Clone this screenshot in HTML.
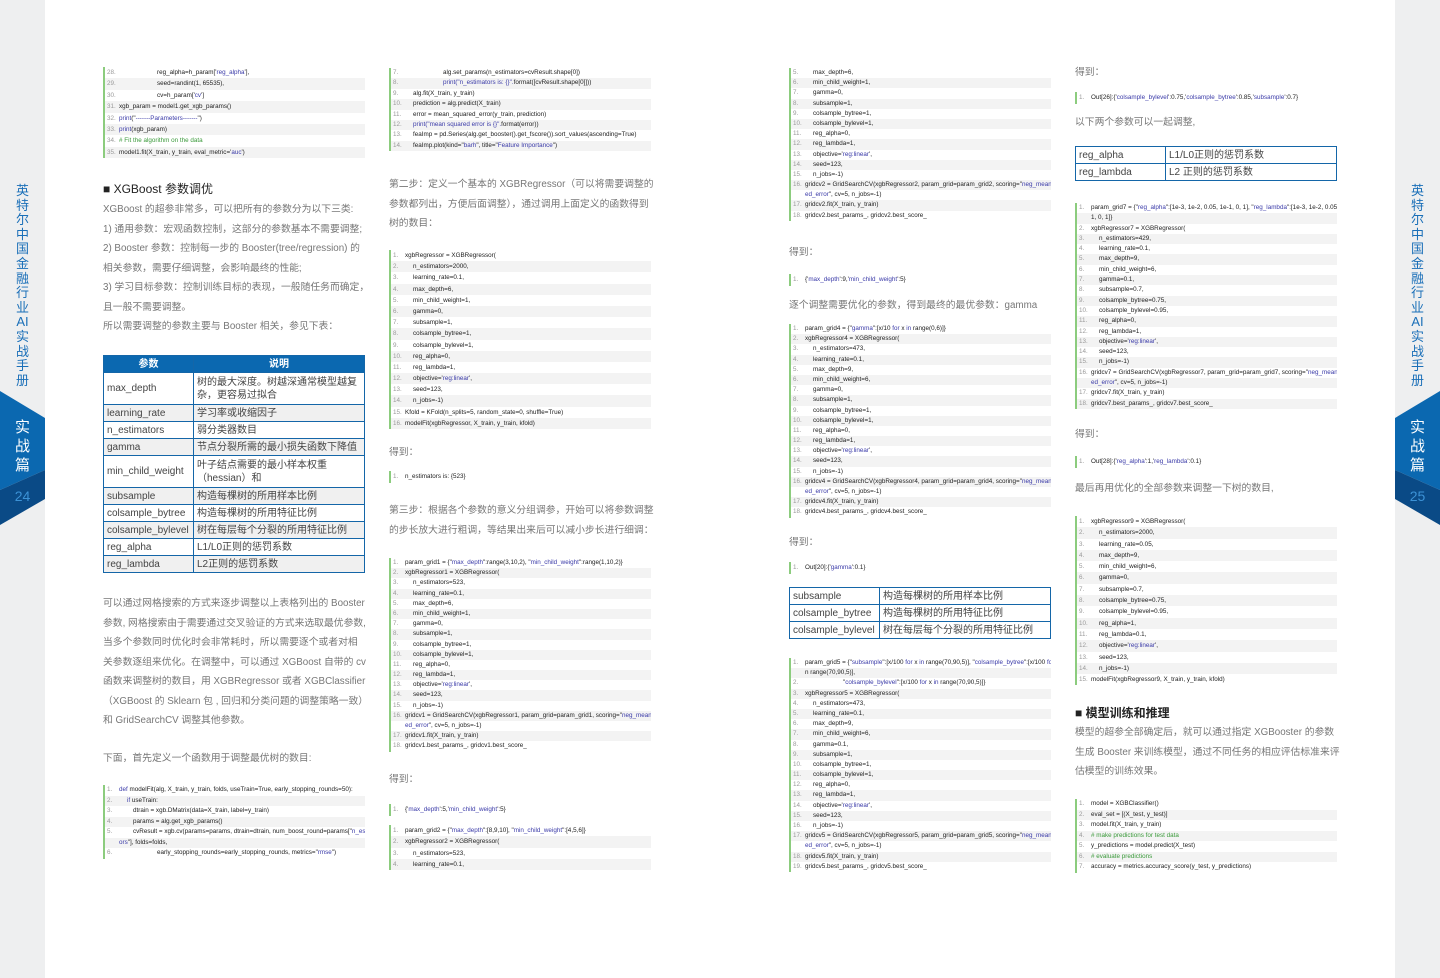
<!DOCTYPE html>
<html><head><meta charset="utf-8"><style>
*{box-sizing:border-box}
body{margin:0;width:1440px;height:978px;position:relative;background:#fff;font-family:"Liberation Sans","Noto Sans CJK SC",sans-serif;overflow:hidden}
.side{position:absolute;top:0;width:45px;height:978px;background:#eeeff0}
.vt{position:absolute;width:45px;text-align:center;color:#1a6fb8;font-size:13px;line-height:14.6px;top:184px}
.c{position:absolute;border-left:2px solid #8ccc7e}
.c p{margin:0;font-size:6.3px;white-space:nowrap;overflow:hidden;color:#222;padding-left:14px;position:relative}
.c p i{position:absolute;left:2px;font-style:normal;color:#999}
.c p:nth-child(even){background:#f3f3f3}
.c p.a{padding-left:22px}.c p.b2{padding-left:28px}.c p.d{padding-left:52px}
.s{color:#3a3aa8}.g{color:#3a9a3a}
.t{position:absolute;font-size:9.8px;color:#777;line-height:19.5px;white-space:nowrap}
.h{position:absolute;font-size:12px;color:#222;white-space:nowrap}
table{position:absolute;border-collapse:collapse;font-size:10px;color:#444}
td,th{border:1.5px solid #1466a8;padding:0 3px;height:17px;line-height:13px;text-align:left;font-weight:normal}
th{background:#0b68b0;color:#fff;text-align:center;font-weight:bold}
tr.gr td{background:#f0f0f0}
</style></head><body>
<div class="side" style="left:0"></div>
<div class="side" style="left:1395px"></div>
<div class="vt" style="left:0">英<br>特<br>尔<br>中<br>国<br>金<br>融<br>行<br>业<br>AI<br>实<br>战<br>手<br>册</div>
<div class="vt" style="left:1395px">英<br>特<br>尔<br>中<br>国<br>金<br>融<br>行<br>业<br>AI<br>实<br>战<br>手<br>册</div>
<svg style="position:absolute;left:0;top:385px" width="45" height="145"><polygon points="0,6 45,33 45,85 0,105" fill="#0b68b0"/><polygon points="0,105 45,85 45,114 0,140" fill="#0a4a86"/></svg>
<svg style="position:absolute;left:1395px;top:385px" width="45" height="145"><polygon points="45,6 0,33 0,85 45,105" fill="#0b68b0"/><polygon points="45,105 0,85 0,114 45,140" fill="#0a4a86"/></svg>
<div style="position:absolute;left:0;width:45px;top:418px;text-align:center;color:#fff;font-size:15px;line-height:19px">实<br>战<br>篇</div>
<div style="position:absolute;left:1395px;width:45px;top:418px;text-align:center;color:#fff;font-size:15px;line-height:19px">实<br>战<br>篇</div>
<div style="position:absolute;left:0;width:45px;top:488px;text-align:center;color:#3c92d6;font-size:14px">24</div>
<div style="position:absolute;left:1395px;width:45px;top:488px;text-align:center;color:#3c92d6;font-size:14px">25</div>

<!-- COL1 -->
<div class="c" style="left:103px;top:67px;width:262px">
<p class="d" style="height:11.4px;line-height:11.4px"><i>28.</i>reg_alpha=h_param['<span class="s">reg_alpha</span>'],</p>
<p class="d" style="height:11.4px;line-height:11.4px"><i>29.</i>seed=randint(1, 65535),</p>
<p class="d" style="height:11.4px;line-height:11.4px"><i>30.</i>cv=h_param['<span class="s">cv</span>']</p>
<p style="height:11.4px;line-height:11.4px"><i>31.</i>xgb_param = model1.get_xgb_params()</p>
<p style="height:11.4px;line-height:11.4px"><i>32.</i><span class="s">print</span>("<span class="s">-------Parameters-------</span>")</p>
<p style="height:11.4px;line-height:11.4px"><i>33.</i><span class="s">print</span>(xgb_param)</p>
<p style="height:11.4px;line-height:11.4px"><i>34.</i><span class="g"># Fit the algorithm on the data</span></p>
<p style="height:11.4px;line-height:11.4px"><i>35.</i>model1.fit(X_train, y_train, eval_metric='<span class="s">auc</span>')</p>
</div>
<div class="h" style="left:103px;top:180px">■ XGBoost 参数调优</div>
<div class="t" style="left:103px;top:200px">XGBoost 的超参非常多，可以把所有的参数分为以下三类:<br>1) 通用参数：宏观函数控制，这部分的参数基本不需要调整;<br>2) Booster 参数：控制每一步的 Booster(tree/regression) 的<br>相关参数，需要仔细调整，会影响最终的性能;<br>3) 学习目标参数：控制训练目标的表现，一般随任务而确定，<br>且一般不需要调整。<br>所以需要调整的参数主要与 Booster 相关，参见下表：</div>
<table style="left:103px;top:355px;width:262px">
<tr><th style="width:90px">参数</th><th>说明</th></tr>
<tr><td>max_depth</td><td style="height:32px">树的最大深度。树越深通常模型越复杂，更容易过拟合</td></tr>
<tr class="gr"><td>learning_rate</td><td>学习率或收缩因子</td></tr>
<tr><td>n_estimators</td><td>弱分类器数目</td></tr>
<tr class="gr"><td>gamma</td><td>节点分裂所需的最小损失函数下降值</td></tr>
<tr><td>min_child_weight</td><td style="height:32px">叶子结点需要的最小样本权重（hessian）和</td></tr>
<tr class="gr"><td>subsample</td><td>构造每棵树的所用样本比例</td></tr>
<tr><td>colsample_bytree</td><td>构造每棵树的所用特征比例</td></tr>
<tr class="gr"><td>colsample_bylevel</td><td>树在每层每个分裂的所用特征比例</td></tr>
<tr><td>reg_alpha</td><td>L1/L0正则的惩罚系数</td></tr>
<tr class="gr"><td>reg_lambda</td><td>L2正则的惩罚系数</td></tr>
</table>
<div class="t" style="left:103px;top:594px">可以通过网格搜索的方式来逐步调整以上表格列出的 Booster<br>参数, 网格搜索由于需要通过交叉验证的方式来选取最优参数,<br>当多个参数同时优化时会非常耗时，所以需要逐个或者对相<br>关参数逐组来优化。在调整中，可以通过 XGBoost 自带的 cv<br>函数来调整树的数目，用 XGBRegressor 或者 XGBClassifier<br>（XGBoost 的 Sklearn 包 , 回归和分类问题的调整策略一致）<br>和 GridSearchCV 调整其他参数。</div>
<div class="t" style="left:103px;top:749px">下面，首先定义一个函数用于调整最优树的数目:</div>
<div class="c" style="left:103px;top:785px;width:262px">
<p style="height:10.5px;line-height:10.5px"><i>1.</i><span class="s">def</span> modelFit(alg, X_train, y_train, folds, useTrain=True, early_stopping_rounds=50):</p>
<p class="a" style="height:10.5px;line-height:10.5px"><i>2.</i><span class="s">if</span> useTrain:</p>
<p class="b2" style="height:10.5px;line-height:10.5px"><i>3.</i>dtrain = xgb.DMatrix(data=X_train, label=y_train)</p>
<p class="b2" style="height:10.5px;line-height:10.5px"><i>4.</i>params = alg.get_xgb_params()</p>
<p class="b2" style="height:10.5px;line-height:10.5px"><i>5.</i>cvResult = xgb.cv(params=params, dtrain=dtrain, num_boost_round=params["<span class="s">n_estimat</span></p>
<p style="height:10.5px;line-height:10.5px"><i></i><span class="s">ors</span>"], folds=folds,</p>
<p class="d" style="height:10.5px;line-height:10.5px"><i>6.</i>early_stopping_rounds=early_stopping_rounds, metrics="<span class="s">rmse</span>")</p>
</div>

<!-- COL2 -->
<div class="c" style="left:389px;top:68px;width:262px">
<p class="d" style="height:10.4px;line-height:10.4px"><i>7.</i>alg.set_params(n_estimators=cvResult.shape[0])</p>
<p class="d" style="height:10.4px;line-height:10.4px"><i>8.</i><span class="s">print("n_estimators is: {}".</span>format([cvResult.shape[0]]))</p>
<p class="a" style="height:10.4px;line-height:10.4px"><i>9.</i>alg.fit(X_train, y_train)</p>
<p class="a" style="height:10.4px;line-height:10.4px"><i>10.</i>prediction = alg.predict(X_train)</p>
<p class="a" style="height:10.4px;line-height:10.4px"><i>11.</i>error = mean_squared_error(y_train, prediction)</p>
<p class="a" style="height:10.4px;line-height:10.4px"><i>12.</i><span class="s">print("mean squared error is {}".</span>format(error))</p>
<p class="a" style="height:10.4px;line-height:10.4px"><i>13.</i>feaImp = pd.Series(alg.get_booster().get_fscore()).sort_values(ascending=True)</p>
<p class="a" style="height:10.4px;line-height:10.4px"><i>14.</i>feaImp.plot(kind="<span class="s">barh</span>", title="<span class="s">Feature Importance</span>")</p>
</div>
<div class="t" style="left:389px;top:175px">第二步：定义一个基本的 XGBRegressor（可以将需要调整的<br>参数都列出，方便后面调整），通过调用上面定义的函数得到<br>树的数目：</div>
<div class="c" style="left:389px;top:250px;width:262px">
<p style="height:11.2px;line-height:11.2px"><i>1.</i>xgbRegressor = XGBRegressor(</p>
<p class="a" style="height:11.2px;line-height:11.2px"><i>2.</i>n_estimators=2000,</p>
<p class="a" style="height:11.2px;line-height:11.2px"><i>3.</i>learning_rate=0.1,</p>
<p class="a" style="height:11.2px;line-height:11.2px"><i>4.</i>max_depth=6,</p>
<p class="a" style="height:11.2px;line-height:11.2px"><i>5.</i>min_child_weight=1,</p>
<p class="a" style="height:11.2px;line-height:11.2px"><i>6.</i>gamma=0,</p>
<p class="a" style="height:11.2px;line-height:11.2px"><i>7.</i>subsample=1,</p>
<p class="a" style="height:11.2px;line-height:11.2px"><i>8.</i>colsample_bytree=1,</p>
<p class="a" style="height:11.2px;line-height:11.2px"><i>9.</i>colsample_bylevel=1,</p>
<p class="a" style="height:11.2px;line-height:11.2px"><i>10.</i>reg_alpha=0,</p>
<p class="a" style="height:11.2px;line-height:11.2px"><i>11.</i>reg_lambda=1,</p>
<p class="a" style="height:11.2px;line-height:11.2px"><i>12.</i>objective='<span class="s">reg:linear</span>',</p>
<p class="a" style="height:11.2px;line-height:11.2px"><i>13.</i>seed=123,</p>
<p class="a" style="height:11.2px;line-height:11.2px"><i>14.</i>n_jobs=-1)</p>
<p style="height:11.2px;line-height:11.2px"><i>15.</i>Kfold = KFold(n_splits=5, random_state=0, shuffle=True)</p>
<p style="height:11.2px;line-height:11.2px"><i>16.</i>modelFit(xgbRegressor, X_train, y_train, kfold)</p>
</div>
<div class="t" style="left:389px;top:443px">得到：</div>
<div class="c" style="left:389px;top:471px;width:262px"><p style="height:12px;line-height:12px"><i>1.</i>n_estimators is: {523}</p></div>
<div class="t" style="left:389px;top:501px">第三步：根据各个参数的意义分组调参，开始可以将参数调整<br>的步长放大进行粗调，等结果出来后可以减小步长进行细调：</div>
<div class="c" style="left:389px;top:558px;width:262px">
<p style="height:10.2px;line-height:10.2px"><i>1.</i>param_grid1 = {"<span class="s">max_depth</span>":range(3,10,2), "<span class="s">min_child_weight</span>":range(1,10,2)}</p>
<p style="height:10.2px;line-height:10.2px"><i>2.</i>xgbRegressor1 = XGBRegressor(</p>
<p class="a" style="height:10.2px;line-height:10.2px"><i>3.</i>n_estimators=523,</p>
<p class="a" style="height:10.2px;line-height:10.2px"><i>4.</i>learning_rate=0.1,</p>
<p class="a" style="height:10.2px;line-height:10.2px"><i>5.</i>max_depth=6,</p>
<p class="a" style="height:10.2px;line-height:10.2px"><i>6.</i>min_child_weight=1,</p>
<p class="a" style="height:10.2px;line-height:10.2px"><i>7.</i>gamma=0,</p>
<p class="a" style="height:10.2px;line-height:10.2px"><i>8.</i>subsample=1,</p>
<p class="a" style="height:10.2px;line-height:10.2px"><i>9.</i>colsample_bytree=1,</p>
<p class="a" style="height:10.2px;line-height:10.2px"><i>10.</i>colsample_bylevel=1,</p>
<p class="a" style="height:10.2px;line-height:10.2px"><i>11.</i>reg_alpha=0,</p>
<p class="a" style="height:10.2px;line-height:10.2px"><i>12.</i>reg_lambda=1,</p>
<p class="a" style="height:10.2px;line-height:10.2px"><i>13.</i>objective='<span class="s">reg:linear</span>',</p>
<p class="a" style="height:10.2px;line-height:10.2px"><i>14.</i>seed=123,</p>
<p class="a" style="height:10.2px;line-height:10.2px"><i>15.</i>n_jobs=-1)</p>
<p style="height:10.2px;line-height:10.2px"><i>16.</i>gridcv1 = GridSearchCV(xgbRegressor1, param_grid=param_grid1, scoring="<span class="s">neg_mean_squar</span></p>
<p style="height:10.2px;line-height:10.2px"><i></i><span class="s">ed_error</span>", cv=5, n_jobs=-1)</p>
<p style="height:10.2px;line-height:10.2px"><i>17.</i>gridcv1.fit(X_train, y_train)</p>
<p style="height:10.2px;line-height:10.2px"><i>18.</i>gridcv1.best_params_, gridcv1.best_score_</p>
</div>
<div class="t" style="left:389px;top:770px">得到：</div>
<div class="c" style="left:389px;top:804px;width:262px"><p style="height:12px;line-height:12px"><i>1.</i>{'<span class="s">max_depth</span>':5,'<span class="s">min_child_weight</span>':5}</p></div>
<div class="c" style="left:389px;top:825px;width:262px">
<p style="height:11.3px;line-height:11.3px"><i>1.</i>param_grid2 = {"<span class="s">max_depth</span>":[8,9,10], "<span class="s">min_child_weight</span>":[4,5,6]}</p>
<p style="height:11.3px;line-height:11.3px"><i>2.</i>xgbRegressor2 = XGBRegressor(</p>
<p class="a" style="height:11.3px;line-height:11.3px"><i>3.</i>n_estimators=523,</p>
<p class="a" style="height:11.3px;line-height:11.3px"><i>4.</i>learning_rate=0.1,</p>
</div>

<!-- COL3 -->
<div class="c" style="left:789px;top:68px;width:262px">
<p class="a" style="height:10.2px;line-height:10.2px"><i>5.</i>max_depth=6,</p>
<p class="a" style="height:10.2px;line-height:10.2px"><i>6.</i>min_child_weight=1,</p>
<p class="a" style="height:10.2px;line-height:10.2px"><i>7.</i>gamma=0,</p>
<p class="a" style="height:10.2px;line-height:10.2px"><i>8.</i>subsample=1,</p>
<p class="a" style="height:10.2px;line-height:10.2px"><i>9.</i>colsample_bytree=1,</p>
<p class="a" style="height:10.2px;line-height:10.2px"><i>10.</i>colsample_bylevel=1,</p>
<p class="a" style="height:10.2px;line-height:10.2px"><i>11.</i>reg_alpha=0,</p>
<p class="a" style="height:10.2px;line-height:10.2px"><i>12.</i>reg_lambda=1,</p>
<p class="a" style="height:10.2px;line-height:10.2px"><i>13.</i>objective='<span class="s">reg:linear</span>',</p>
<p class="a" style="height:10.2px;line-height:10.2px"><i>14.</i>seed=123,</p>
<p class="a" style="height:10.2px;line-height:10.2px"><i>15.</i>n_jobs=-1)</p>
<p style="height:10.2px;line-height:10.2px"><i>16.</i>gridcv2 = GridSearchCV(xgbRegressor2, param_grid=param_grid2, scoring="<span class="s">neg_mean_squar</span></p>
<p style="height:10.2px;line-height:10.2px"><i></i><span class="s">ed_error</span>", cv=5, n_jobs=-1)</p>
<p style="height:10.2px;line-height:10.2px"><i>17.</i>gridcv2.fit(X_train, y_train)</p>
<p style="height:10.2px;line-height:10.2px"><i>18.</i>gridcv2.best_params_, gridcv2.best_score_</p>
</div>
<div class="t" style="left:789px;top:243px">得到：</div>
<div class="c" style="left:789px;top:274px;width:262px"><p style="height:12px;line-height:12px"><i>1.</i>{'<span class="s">max_depth</span>':9,'<span class="s">min_child_weight</span>':5}</p></div>
<div class="t" style="left:789px;top:296px">逐个调整需要优化的参数，得到最终的最优参数：gamma</div>
<div class="c" style="left:789px;top:324px;width:262px">
<p style="height:10.2px;line-height:10.2px"><i>1.</i>param_grid4 = {"<span class="s">gamma</span>":[x/10 <span class="s">for</span> x <span class="s">in</span> range(0,6)]}</p>
<p style="height:10.2px;line-height:10.2px"><i>2.</i>xgbRegressor4 = XGBRegressor(</p>
<p class="a" style="height:10.2px;line-height:10.2px"><i>3.</i>n_estimators=473,</p>
<p class="a" style="height:10.2px;line-height:10.2px"><i>4.</i>learning_rate=0.1,</p>
<p class="a" style="height:10.2px;line-height:10.2px"><i>5.</i>max_depth=9,</p>
<p class="a" style="height:10.2px;line-height:10.2px"><i>6.</i>min_child_weight=6,</p>
<p class="a" style="height:10.2px;line-height:10.2px"><i>7.</i>gamma=0,</p>
<p class="a" style="height:10.2px;line-height:10.2px"><i>8.</i>subsample=1,</p>
<p class="a" style="height:10.2px;line-height:10.2px"><i>9.</i>colsample_bytree=1,</p>
<p class="a" style="height:10.2px;line-height:10.2px"><i>10.</i>colsample_bylevel=1,</p>
<p class="a" style="height:10.2px;line-height:10.2px"><i>11.</i>reg_alpha=0,</p>
<p class="a" style="height:10.2px;line-height:10.2px"><i>12.</i>reg_lambda=1,</p>
<p class="a" style="height:10.2px;line-height:10.2px"><i>13.</i>objective='<span class="s">reg:linear</span>',</p>
<p class="a" style="height:10.2px;line-height:10.2px"><i>14.</i>seed=123,</p>
<p class="a" style="height:10.2px;line-height:10.2px"><i>15.</i>n_jobs=-1)</p>
<p style="height:10.2px;line-height:10.2px"><i>16.</i>gridcv4 = GridSearchCV(xgbRegressor4, param_grid=param_grid4, scoring="<span class="s">neg_mean_squar</span></p>
<p style="height:10.2px;line-height:10.2px"><i></i><span class="s">ed_error</span>", cv=5, n_jobs=-1)</p>
<p style="height:10.2px;line-height:10.2px"><i>17.</i>gridcv4.fit(X_train, y_train)</p>
<p style="height:10.2px;line-height:10.2px"><i>18.</i>gridcv4.best_params_, gridcv4.best_score_</p>
</div>
<div class="t" style="left:789px;top:533px">得到：</div>
<div class="c" style="left:789px;top:562px;width:262px"><p style="height:12px;line-height:12px"><i>1.</i>Out[20]:{'<span class="s">gamma</span>':0.1}</p></div>
<table style="left:789px;top:587px;width:262px">
<tr><td style="width:90px">subsample</td><td>构造每棵树的所用样本比例</td></tr>
<tr><td>colsample_bytree</td><td>构造每棵树的所用特征比例</td></tr>
<tr><td>colsample_bylevel</td><td>树在每层每个分裂的所用特征比例</td></tr>
</table>
<div class="c" style="left:789px;top:658px;width:262px">
<p style="height:10.2px;line-height:10.2px"><i>1.</i>param_grid5 = {"<span class="s">subsample</span>":[x/100 <span class="s">for</span> x <span class="s">in</span> range(70,90,5)], "<span class="s">colsample_bytree</span>":[x/100 <span class="s">for</span> x i</p>
<p style="height:10.2px;line-height:10.2px"><i></i>n range(70,90,5)],</p>
<p class="d" style="height:10.2px;line-height:10.2px"><i>2.</i>"<span class="s">colsample_bylevel</span>":[x/100 <span class="s">for</span> x <span class="s">in</span> range(70,90,5)]}</p>
<p style="height:10.2px;line-height:10.2px"><i>3.</i>xgbRegressor5 = XGBRegressor(</p>
<p class="a" style="height:10.2px;line-height:10.2px"><i>4.</i>n_estimators=473,</p>
<p class="a" style="height:10.2px;line-height:10.2px"><i>5.</i>learning_rate=0.1,</p>
<p class="a" style="height:10.2px;line-height:10.2px"><i>6.</i>max_depth=9,</p>
<p class="a" style="height:10.2px;line-height:10.2px"><i>7.</i>min_child_weight=6,</p>
<p class="a" style="height:10.2px;line-height:10.2px"><i>8.</i>gamma=0.1,</p>
<p class="a" style="height:10.2px;line-height:10.2px"><i>9.</i>subsample=1,</p>
<p class="a" style="height:10.2px;line-height:10.2px"><i>10.</i>colsample_bytree=1,</p>
<p class="a" style="height:10.2px;line-height:10.2px"><i>11.</i>colsample_bylevel=1,</p>
<p class="a" style="height:10.2px;line-height:10.2px"><i>12.</i>reg_alpha=0,</p>
<p class="a" style="height:10.2px;line-height:10.2px"><i>13.</i>reg_lambda=1,</p>
<p class="a" style="height:10.2px;line-height:10.2px"><i>14.</i>objective='<span class="s">reg:linear</span>',</p>
<p class="a" style="height:10.2px;line-height:10.2px"><i>15.</i>seed=123,</p>
<p class="a" style="height:10.2px;line-height:10.2px"><i>16.</i>n_jobs=-1)</p>
<p style="height:10.2px;line-height:10.2px"><i>17.</i>gridcv5 = GridSearchCV(xgbRegressor5, param_grid=param_grid5, scoring="<span class="s">neg_mean_squar</span></p>
<p style="height:10.2px;line-height:10.2px"><i></i><span class="s">ed_error</span>", cv=5, n_jobs=-1)</p>
<p style="height:10.2px;line-height:10.2px"><i>18.</i>gridcv5.fit(X_train, y_train)</p>
<p style="height:10.2px;line-height:10.2px"><i>19.</i>gridcv5.best_params_, gridcv5.best_score_</p>
</div>

<!-- COL4 -->
<div class="t" style="left:1075px;top:63px">得到：</div>
<div class="c" style="left:1075px;top:92px;width:262px"><p style="height:12px;line-height:12px"><i>1.</i>Out[26]:{'<span class="s">colsample_bylevel</span>':0.75,'<span class="s">colsample_bytree</span>':0.85,'<span class="s">subsample</span>':0.7}</p></div>
<div class="t" style="left:1075px;top:113px">以下两个参数可以一起调整,</div>
<table style="left:1075px;top:146px;width:262px">
<tr><td style="width:90px">reg_alpha</td><td>L1/L0正则的惩罚系数</td></tr>
<tr><td>reg_lambda</td><td>L2 正则的惩罚系数</td></tr>
</table>
<div class="c" style="left:1075px;top:203px;width:262px">
<p style="height:10.3px;line-height:10.3px"><i>1.</i>param_grid7 = {"<span class="s">reg_alpha</span>":[1e-3, 1e-2, 0.05, 1e-1, 0, 1], "<span class="s">reg_lambda</span>":[1e-3, 1e-2, 0.05, 1e-</p>
<p style="height:10.3px;line-height:10.3px"><i></i>1, 0, 1]}</p>
<p style="height:10.3px;line-height:10.3px"><i>2.</i>xgbRegressor7 = XGBRegressor(</p>
<p class="a" style="height:10.3px;line-height:10.3px"><i>3.</i>n_estimators=429,</p>
<p class="a" style="height:10.3px;line-height:10.3px"><i>4.</i>learning_rate=0.1,</p>
<p class="a" style="height:10.3px;line-height:10.3px"><i>5.</i>max_depth=9,</p>
<p class="a" style="height:10.3px;line-height:10.3px"><i>6.</i>min_child_weight=6,</p>
<p class="a" style="height:10.3px;line-height:10.3px"><i>7.</i>gamma=0.1,</p>
<p class="a" style="height:10.3px;line-height:10.3px"><i>8.</i>subsample=0.7,</p>
<p class="a" style="height:10.3px;line-height:10.3px"><i>9.</i>colsample_bytree=0.75,</p>
<p class="a" style="height:10.3px;line-height:10.3px"><i>10.</i>colsample_bylevel=0.95,</p>
<p class="a" style="height:10.3px;line-height:10.3px"><i>11.</i>reg_alpha=0,</p>
<p class="a" style="height:10.3px;line-height:10.3px"><i>12.</i>reg_lambda=1,</p>
<p class="a" style="height:10.3px;line-height:10.3px"><i>13.</i>objective='<span class="s">reg:linear</span>',</p>
<p class="a" style="height:10.3px;line-height:10.3px"><i>14.</i>seed=123,</p>
<p class="a" style="height:10.3px;line-height:10.3px"><i>15.</i>n_jobs=-1)</p>
<p style="height:10.3px;line-height:10.3px"><i>16.</i>gridcv7 = GridSearchCV(xgbRegressor7, param_grid=param_grid7, scoring="<span class="s">neg_mean_squar</span></p>
<p style="height:10.3px;line-height:10.3px"><i></i><span class="s">ed_error</span>", cv=5, n_jobs=-1)</p>
<p style="height:10.3px;line-height:10.3px"><i>17.</i>gridcv7.fit(X_train, y_train)</p>
<p style="height:10.3px;line-height:10.3px"><i>18.</i>gridcv7.best_params_, gridcv7.best_score_</p>
</div>
<div class="t" style="left:1075px;top:425px">得到：</div>
<div class="c" style="left:1075px;top:456px;width:262px"><p style="height:12px;line-height:12px"><i>1.</i>Out[28]:{'<span class="s">reg_alpha</span>':1,'<span class="s">reg_lambda</span>':0.1}</p></div>
<div class="t" style="left:1075px;top:479px">最后再用优化的全部参数来调整一下树的数目,</div>
<div class="c" style="left:1075px;top:516px;width:262px">
<p style="height:11.3px;line-height:11.3px"><i>1.</i>xgbRegressor9 = XGBRegressor(</p>
<p class="a" style="height:11.3px;line-height:11.3px"><i>2.</i>n_estimators=2000,</p>
<p class="a" style="height:11.3px;line-height:11.3px"><i>3.</i>learning_rate=0.05,</p>
<p class="a" style="height:11.3px;line-height:11.3px"><i>4.</i>max_depth=9,</p>
<p class="a" style="height:11.3px;line-height:11.3px"><i>5.</i>min_child_weight=6,</p>
<p class="a" style="height:11.3px;line-height:11.3px"><i>6.</i>gamma=0,</p>
<p class="a" style="height:11.3px;line-height:11.3px"><i>7.</i>subsample=0.7,</p>
<p class="a" style="height:11.3px;line-height:11.3px"><i>8.</i>colsample_bytree=0.75,</p>
<p class="a" style="height:11.3px;line-height:11.3px"><i>9.</i>colsample_bylevel=0.95,</p>
<p class="a" style="height:11.3px;line-height:11.3px"><i>10.</i>reg_alpha=1,</p>
<p class="a" style="height:11.3px;line-height:11.3px"><i>11.</i>reg_lambda=0.1,</p>
<p class="a" style="height:11.3px;line-height:11.3px"><i>12.</i>objective='<span class="s">reg:linear</span>',</p>
<p class="a" style="height:11.3px;line-height:11.3px"><i>13.</i>seed=123,</p>
<p class="a" style="height:11.3px;line-height:11.3px"><i>14.</i>n_jobs=-1)</p>
<p style="height:11.3px;line-height:11.3px"><i>15.</i>modelFit(xgbRegressor9, X_train, y_train, kfold)</p>
</div>
<div class="h" style="left:1075px;top:704px;font-weight:bold">■ 模型训练和推理</div>
<div class="t" style="left:1075px;top:723px">模型的超参全部确定后，就可以通过指定 XGBooster 的参数<br>生成 Booster 来训练模型，通过不同任务的相应评估标准来评<br>估模型的训练效果。</div>
<div class="c" style="left:1075px;top:799px;width:262px">
<p style="height:10.5px;line-height:10.5px"><i>1.</i>model = XGBClassifier()</p>
<p style="height:10.5px;line-height:10.5px"><i>2.</i>eval_set = [(X_test, y_test)]</p>
<p style="height:10.5px;line-height:10.5px"><i>3.</i>model.fit(X_train, y_train)</p>
<p style="height:10.5px;line-height:10.5px"><i>4.</i><span class="g"># make predictions for test data</span></p>
<p style="height:10.5px;line-height:10.5px"><i>5.</i>y_predictions = model.predict(X_test)</p>
<p style="height:10.5px;line-height:10.5px"><i>6.</i><span class="g"># evaluate predictions</span></p>
<p style="height:10.5px;line-height:10.5px"><i>7.</i>accuracy = metrics.accuracy_score(y_test, y_predictions)</p>
</div>
</body></html>
